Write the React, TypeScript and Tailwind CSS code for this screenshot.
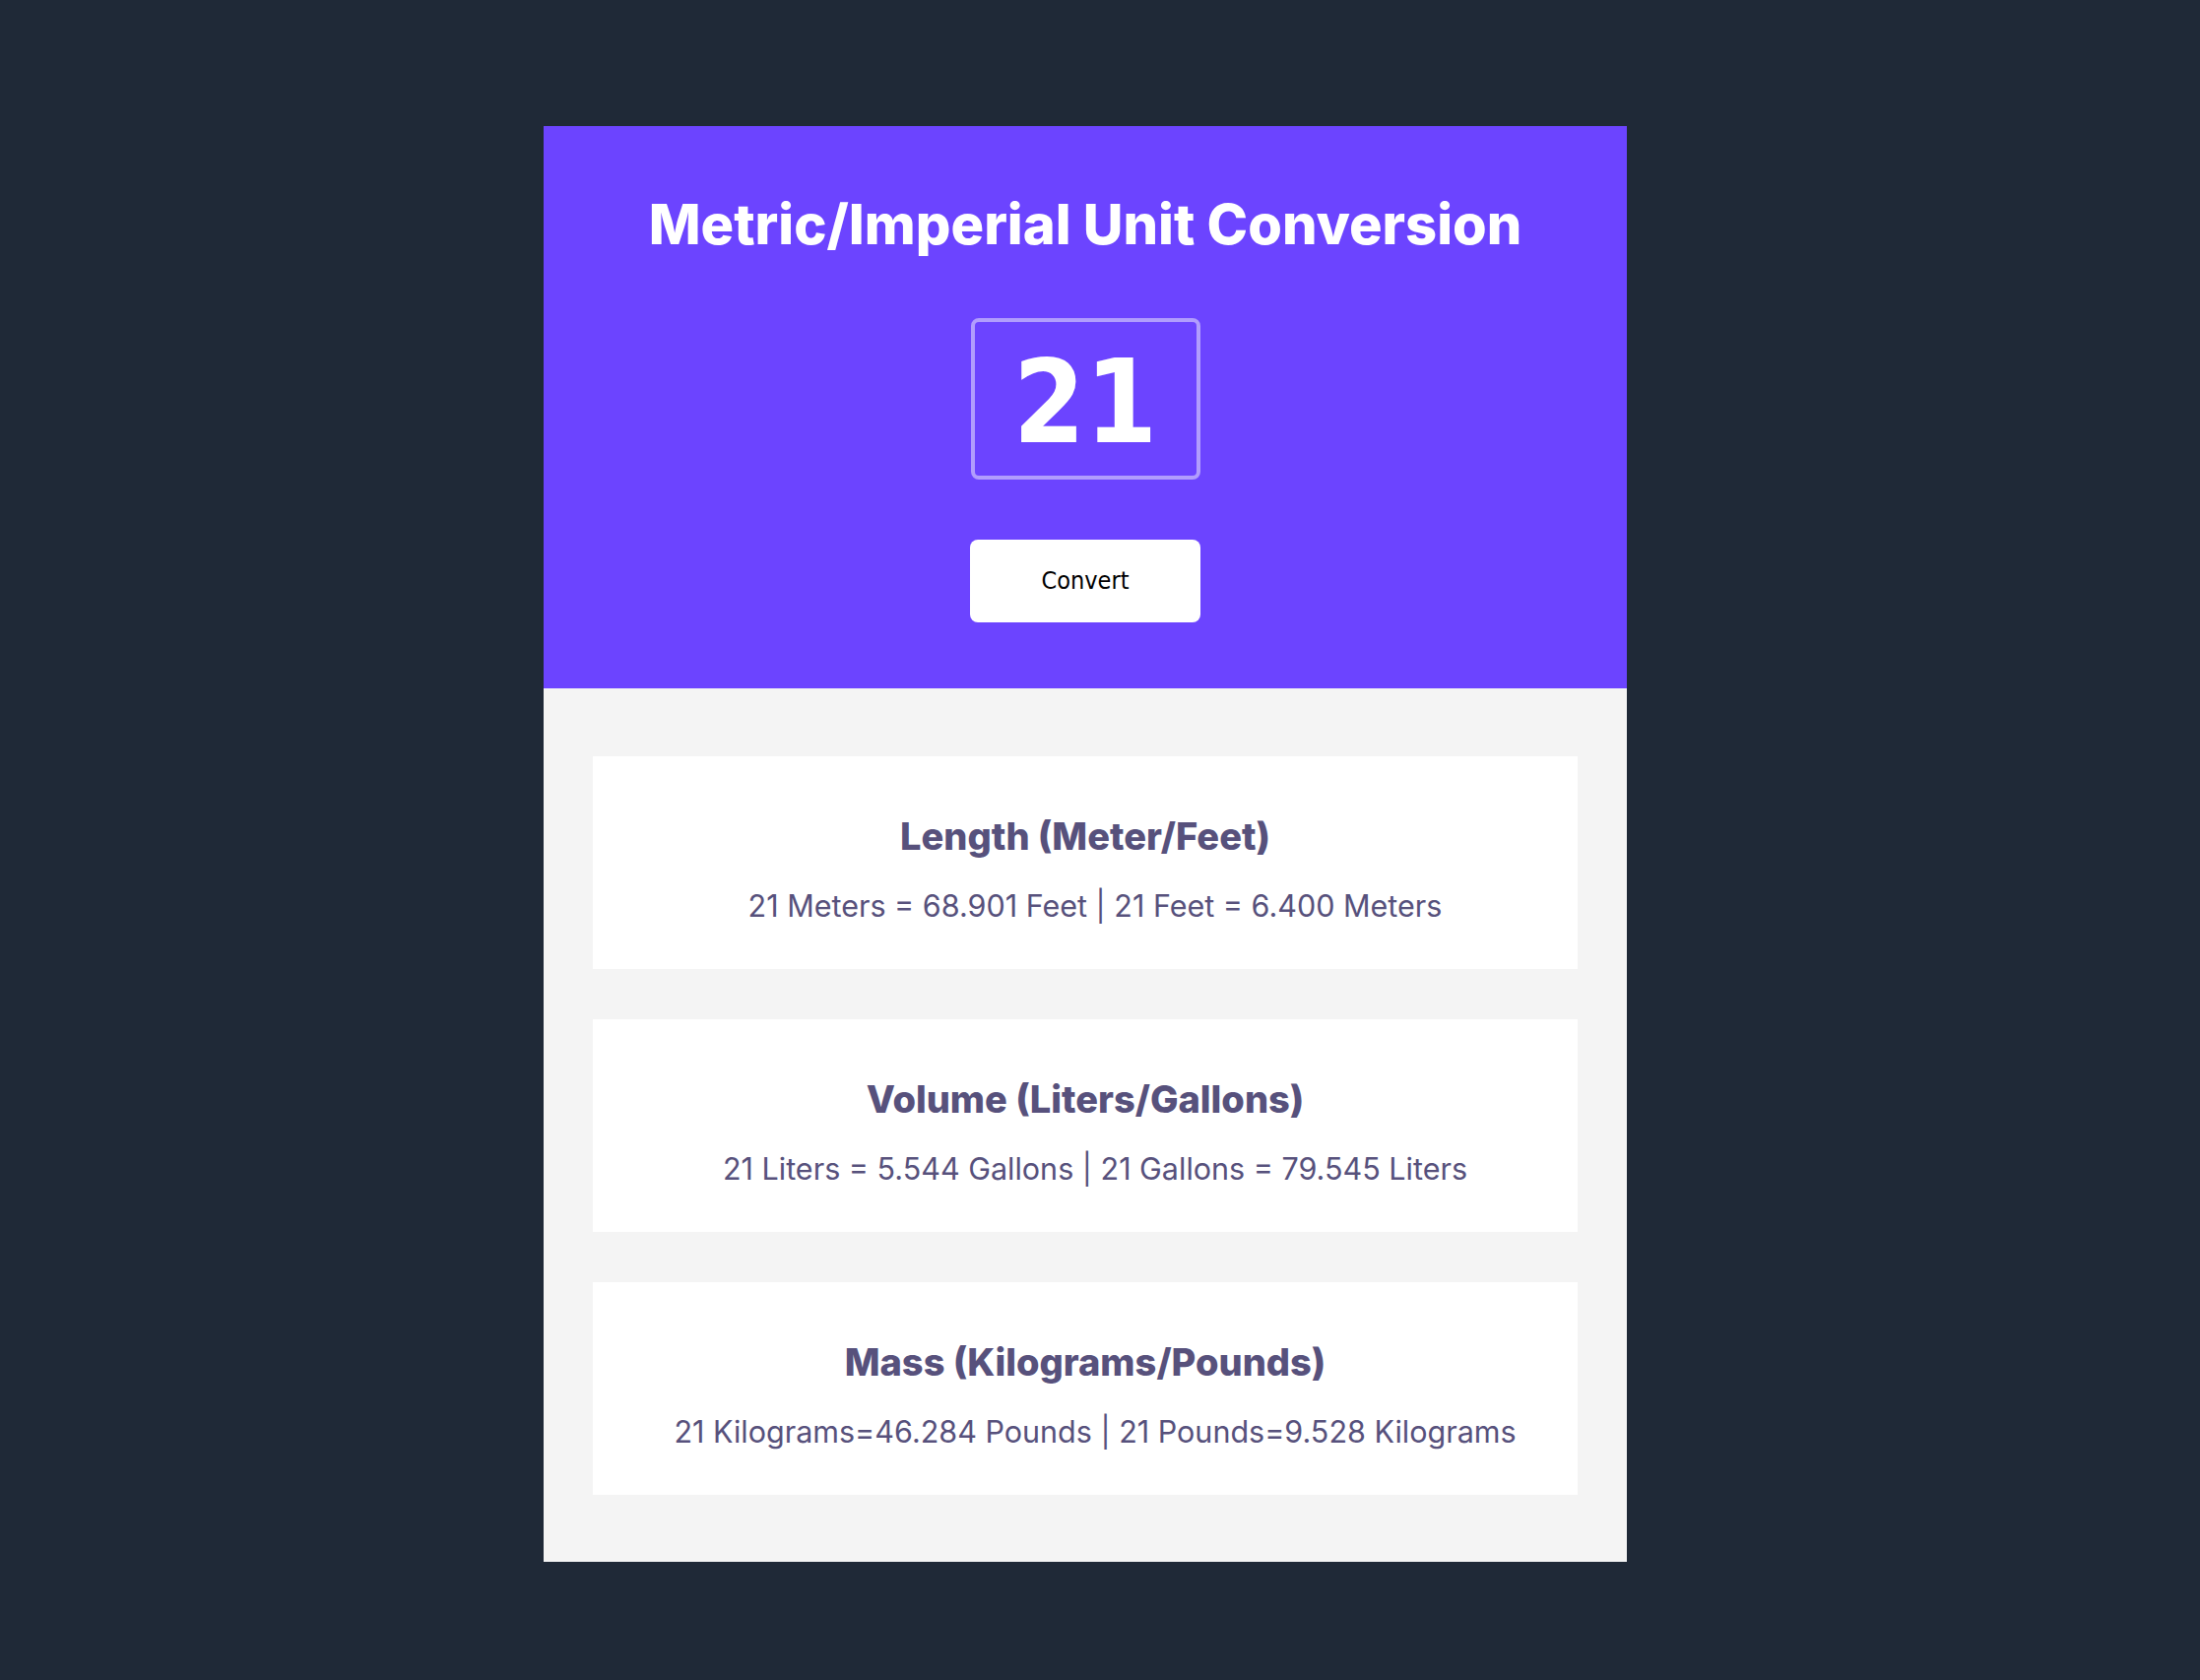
import React from "react";

const rows = [
  { title: "Length (Meter/Feet)", text: "21 Meters = 68.901 Feet | 21 Feet = 6.400 Meters" },
  { title: "Volume (Liters/Gallons)", text: "21 Liters = 5.544 Gallons | 21 Gallons = 79.545 Liters" },
  { title: "Mass (Kilograms/Pounds)", text: "21 Kilograms=46.284 Pounds | 21 Pounds=9.528 Kilograms" },
];

const condensed = { fontFamily: "'DejaVu Sans Condensed', 'DejaVu Sans', sans-serif", fontStretch: "condensed" as const };

export default function App() {
  return (
    <div className="min-h-screen bg-[#1f2937] pt-[128px] pb-[120px] pr-[30px]" style={{ fontFamily: "Inter, 'Noto Sans', sans-serif" }}>
      <div className="mx-auto w-[1100px]">
        <div className="bg-[#6c44ff] h-[571px] flex flex-col items-center pt-[65px]">
          <h1 className="text-white font-extrabold text-[56px] leading-[70px]">Metric/Imperial Unit Conversion</h1>
          <input
            defaultValue="21"
            className="mt-[60px] w-[233px] h-[164px] rounded-[8px] border-[4px] border-[#b19dfd] bg-transparent text-center text-white font-bold text-[117px] leading-none pt-[6px] outline-none"
            style={condensed}
          />
          <button
            className="mt-[61px] w-[234px] h-[84px] rounded-[8px] bg-white text-black text-[25px]"
            style={condensed}
          >
            Convert
          </button>
        </div>
        <div className="bg-[#f4f4f4] px-[50px] pt-[69px] pb-[68px] flex flex-col gap-[51px]">
          {rows.map((r) => (
            <div key={r.title} className="bg-white h-[216px] flex flex-col items-center pt-[56px] text-[#57517c]">
              <h2 className="font-extrabold text-[38px] leading-[50px]">{r.title}</h2>
              <p className="mt-[26px] pl-[20px] text-[30.5px] leading-[40px]">{r.text}</p>
            </div>
          ))}
        </div>
      </div>
    </div>
  );
}
